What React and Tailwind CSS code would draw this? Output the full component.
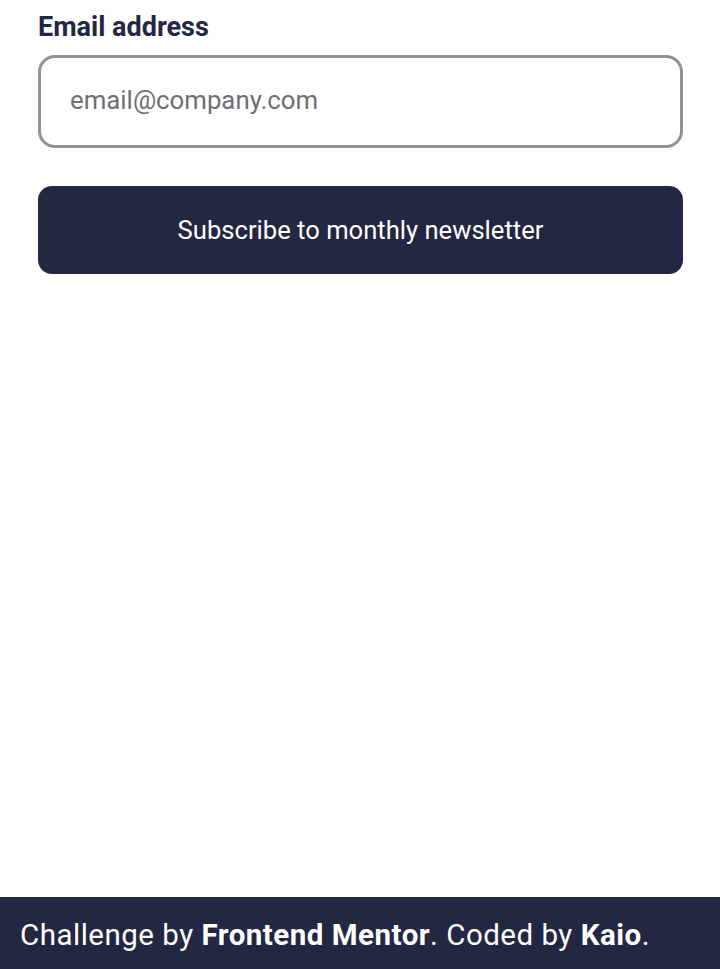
export default function App() {
  return (
    <div className="min-h-screen flex flex-col bg-white font-['Roboto',sans-serif]">
      {/* formulario */}
      <main className="flex-1 px-[38px] pt-[11px]">
        <label htmlFor="email" className="block text-[27px] leading-[32px] font-bold text-[#242742]">
          Email address
        </label>
        <input
          id="email"
          type="email"
          placeholder="email@company.com"
          className="mt-[12px] block w-[645px] h-[93px] border-[3px] border-[#919297] rounded-[17px] pl-[29px] pb-[3px] text-[25.8px] text-[#242742] placeholder:text-[#6f6f73] outline-none"
        />
        <button className="mt-[38px] w-[645px] h-[88px] rounded-[14px] bg-[#242742] text-white text-[25.6px]">
          Subscribe to monthly newsletter
        </button>
      </main>

      {/* footer */}
      <footer className="h-[72px] bg-[#242742] flex items-center px-[20px] pt-[4px] text-white text-[29.5px] tracking-[0.5px]">
        <p>
          Challenge by <span className="font-bold">Frontend Mentor</span>. Coded by <span className="font-bold">Kaio</span>.
        </p>
      </footer>
    </div>
  );
}
